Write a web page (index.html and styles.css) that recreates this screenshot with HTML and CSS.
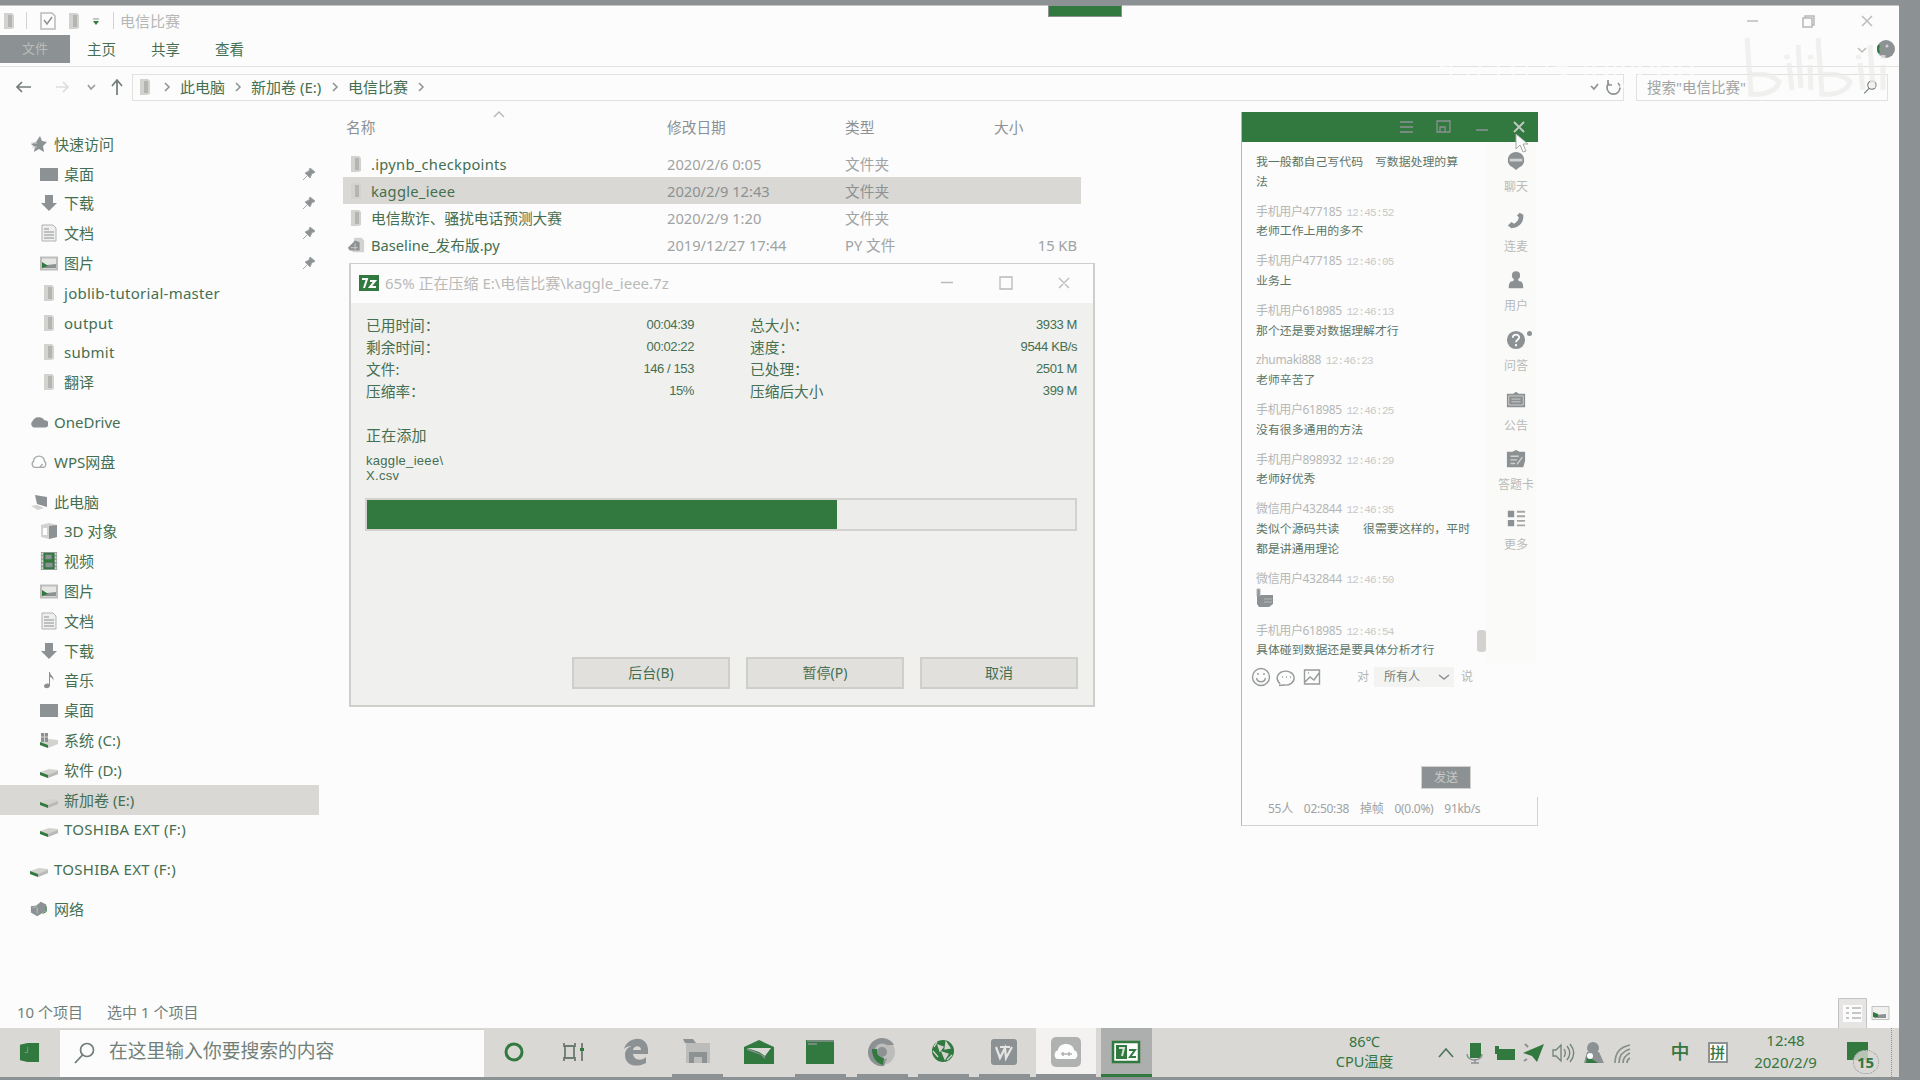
FILE: index.html
```html
<!DOCTYPE html>
<html lang="zh-CN">
<head>
<meta charset="utf-8">
<title>电信比赛</title>
<link rel="stylesheet" href="styles.css">
</head>
<body>
<svg class="defs" width="0" height="0">
  <symbol id="folder" viewBox="0 0 18 18"><path d="M4 1h8l2 2v13l-3 1H4z" fill="#d3d2ce"/><path d="M8 3h4v12H8z" fill="#b4b5b3"/></symbol>
  <symbol id="desk" viewBox="0 0 18 18"><path d="M0 3h18v13H0z" fill="#8c9193"/></symbol>
  <symbol id="down" viewBox="0 0 18 18"><path d="M5 1h8v8h4l-8 8-8-8h4z" fill="#8c9193"/></symbol>
  <symbol id="doc" viewBox="0 0 18 18"><path d="M2 1h11l3 3v13H2z" fill="#efefed" stroke="#b0b2b1"/><path d="M4 5h5M4 8h10M4 11h10M4 14h10" stroke="#8c9193"/></symbol>
  <symbol id="pic" viewBox="0 0 18 18"><path d="M1 3.500h16v12H1z" fill="#e6e6e4" stroke="#bdbebc" stroke-width="2"/><path d="M2 9l5 2 9-1v4H2z" fill="#8c9193"/><path d="M2 8l6 4-6 2z" fill="#31793f"/></symbol>
  <symbol id="cloud" viewBox="0 0 20 16"><path d="M4 14a4 4 0 0 1-1-7 7 6 0 0 1 13-1 4 4 0 0 1 1 8z" fill="#8c9193"/></symbol>
  <symbol id="cloudo" viewBox="0 0 20 18"><path d="M5 15a4 4 0 0 1-1-7 6 5.500 0 0 1 12 0 4 4 0 0 1-1 7zM11 15l3-4" fill="none" stroke="#a5a8a8" stroke-width="1.500"/></symbol>
  <symbol id="pc" viewBox="0 0 18 18"><path d="M5 2l12 2v10L7 11z" fill="#8c9193"/><path d="M1 13l6-1 7 3-6 2z" fill="#d3d2ce"/></symbol>
  <symbol id="cube" viewBox="0 0 18 18"><path d="M1 3l8-2 8 2v12l-8 2-8-2z" fill="#d3d2ce"/><path d="M9 4l8-1v12l-8 2z" fill="#8c9193"/><path d="M3 6h4v7H3z" fill="#fcfcfc"/></symbol>
  <symbol id="film" viewBox="0 0 18 20"><path d="M0 0h18v20H0z" fill="#9a9e9e"/><path d="M3 1h12v18H3z" fill="#31793f"/><path d="M5 3h7v5H5zM5 12h8v5H5z" fill="#8c9193"/><path d="M1.500 1v18M16.500 1v18" stroke="#fcfcfc" stroke-dasharray="2 2"/></symbol>
  <symbol id="note" viewBox="0 0 18 18"><path d="M9 1h1c0 4 5 4 3 9 0-3-2-4-3-4v9c-1 3-6 3-6 0 0-2 3-3 5-2z" fill="#8c9193"/></symbol>
  <symbol id="drive" viewBox="0 0 18 18"><path d="M0 11l9-3 9 1v4l-10 4-8-3z" fill="#d3d2ce"/><path d="M0 11l8 3v3l-8-3z" fill="#31793f"/><path d="M8 14l10-4v3L8 17z" fill="#b9bab8"/></symbol>
  <symbol id="cdrive" viewBox="0 0 18 18"><path d="M0 11l9-3 9 1v4l-10 4-8-3z" fill="#d3d2ce"/><path d="M1 2h7v9H1z" fill="#8c9193"/><path d="M4.500 2v9M1 6h7" stroke="#d3d2ce"/><path d="M0 11l8 3v3l-8-3z" fill="#31793f"/></symbol>
  <symbol id="net" viewBox="0 0 20 18"><path d="M1 6l6-1 5-4 6 3v7l-5 3-5 3-7-4z" fill="#8c9193"/><path d="M18 6v6l-4 2" stroke="#31793f" fill="none"/><path d="M3 8l4-2M8 7v7" stroke="#c4c5c3" fill="none"/></symbol>
  <symbol id="star" viewBox="0 0 18 18"><path d="M10 1l2 5 5 1-4 4 1 6-5-3-5 3 1-5-4-3 5-2z" fill="#8c9193"/><path d="M1 8h6M2 12h5" stroke="#d3d2ce"/></symbol>
  <symbol id="pin" viewBox="0 0 14 14"><path d="M8 1l5 4-1 1-2 .5L8 11 3 6l4-2 .5-2zM5 9l-4 4" fill="#8c9193" stroke="#a5a8a8"/></symbol>
  <symbol id="chev" viewBox="0 0 8 10"><path d="M2 1l4 4-4 4" fill="none" stroke="#8c9193" stroke-width="1.500"/></symbol>
  <symbol id="py" viewBox="0 0 20 18"><path d="M8 1h8l3 3v13H6z" fill="#d3d2ce"/><path d="M1 12l8-8 5 2v9H3z" fill="#8c9193"/><path d="M4 12h8M9 7v8" stroke="#d3d2ce"/></symbol>
  <symbol id="mag" viewBox="0 0 22 22"><circle cx="14" cy="8" r="6.500" fill="none" stroke="#717d77" stroke-width="1.700"/><path d="M9.500 13L2 21" stroke="#717d77" stroke-width="1.800"/></symbol>
</svg>
<div class="desktop">
  <main class="explorer">
    <div class="titlebar">
      <svg class="qi" viewBox="0 0 18 18"><use href="#folder"/></svg><i class="sep s1"></i>
      <svg class="qcheck" viewBox="0 0 16 18"><path d="M1 1h11l3 3v13H1z" fill="#fcfcfc" stroke="#b9bab8" stroke-width="1.500"/><path d="M4 8l3 4 5-7" fill="none" stroke="#8c9193" stroke-width="1.500"/></svg>
      <svg class="qi q2" viewBox="0 0 18 18"><use href="#folder"/></svg>
      <svg class="qcaret" viewBox="0 0 8 8"><path d="M1 1h6" stroke="#8c9193"/><path d="M1 3h6L4 7z" fill="#31793f"/></svg><i class="sep s2"></i>
      <span>电信比赛</span>
      <svg class="winctl" viewBox="0 0 140 20"><path d="M2 10h11M117 5l10 10M127 5l-10 10" stroke="#bbbcba" stroke-width="1.500" fill="none"/><path d="M58 7h9v9h-9zM60 7V5h9v9h-2" fill="none" stroke="#b5b7b5" stroke-width="1.500"/></svg>
    </div>
    <div class="tabs"><b>文件</b><span>主页</span><span>共享</span><span>查看</span>
      <svg class="help" viewBox="0 0 40 20"><path d="M2 9l4 4 4-4" fill="none" stroke="#bbbcba" stroke-width="1.500"/><circle cx="30" cy="10" r="9" fill="#8c9193"/><path d="M23 6a9 9 0 0 0 0 8" stroke="#31793f" fill="none" stroke-width="2"/><circle cx="31" cy="7" r="1.500" fill="#d3d2ce"/></svg>
    </div>
    <div class="address">
      <svg class="nav" viewBox="0 0 132 26"><g fill="none" stroke-width="1.700"><path d="M31 13H17M22 8l-5 5 5 5" stroke="#717d77"/><path d="M56 13h12M63 8l5 5-5 5" stroke="#dedddb"/><path d="M88 11l3 4 4-4" stroke="#999d9d"/><path d="M117 21V7M112 12l5-6 5 6" stroke="#717d77"/></g></svg>
      <div class="path">
        <svg class="pi"><use href="#folder"/></svg><svg class="ch c0"><use href="#chev"/></svg><span class="p1">此电脑</span><svg class="ch"><use href="#chev"/></svg><span class="p2">新加卷 (E:)</span><svg class="ch"><use href="#chev"/></svg><span class="p3">电信比赛</span><svg class="ch"><use href="#chev"/></svg>
        <svg class="refresh" viewBox="0 0 34 20"><path d="M1 9l3 3 4-5M19 6a6.500 6.500 0 1 0 9 0M18 3v5h4" fill="none" stroke="#8c9193" stroke-width="1.700"/></svg>
      </div>
      <div class="search"><span>搜索"电信比赛"</span><svg width="14" height="14"><use href="#mag"/></svg></div>
    </div>
    <div class="content">
      <nav class="side">
        <div class="n top"><svg><use href="#star"/></svg><span>快速访问</span></div>
        <div class="n"><svg><use href="#desk"/></svg><span>桌面</span><svg class="pin"><use href="#pin"/></svg></div>
        <div class="n"><svg><use href="#down"/></svg><span>下载</span><svg class="pin"><use href="#pin"/></svg></div>
        <div class="n"><svg><use href="#doc"/></svg><span>文档</span><svg class="pin"><use href="#pin"/></svg></div>
        <div class="n"><svg><use href="#pic"/></svg><span>图片</span><svg class="pin"><use href="#pin"/></svg></div>
        <div class="n"><svg><use href="#folder"/></svg><span class="lat">joblib-tutorial-master</span></div>
        <div class="n"><svg><use href="#folder"/></svg><span class="lat">output</span></div>
        <div class="n"><svg><use href="#folder"/></svg><span class="lat">submit</span></div>
        <div class="n"><svg><use href="#folder"/></svg><span>翻译</span></div>
        <div class="n top gap"><svg><use href="#cloud"/></svg><span>OneDrive</span></div>
        <div class="n top gap"><svg><use href="#cloudo"/></svg><span>WPS网盘</span></div>
        <div class="n top gap"><svg><use href="#pc"/></svg><span>此电脑</span></div>
        <div class="n"><svg><use href="#cube"/></svg><span>3D 对象</span></div>
        <div class="n"><svg><use href="#film"/></svg><span>视频</span></div>
        <div class="n"><svg><use href="#pic"/></svg><span>图片</span></div>
        <div class="n"><svg><use href="#doc"/></svg><span>文档</span></div>
        <div class="n"><svg><use href="#down"/></svg><span>下载</span></div>
        <div class="n"><svg><use href="#note"/></svg><span>音乐</span></div>
        <div class="n"><svg><use href="#desk"/></svg><span>桌面</span></div>
        <div class="n"><svg><use href="#cdrive"/></svg><span>系统 (C:)</span></div>
        <div class="n"><svg><use href="#drive"/></svg><span>软件 (D:)</span></div>
        <div class="n sel"><svg><use href="#drive"/></svg><span>新加卷 (E:)</span></div>
        <div class="n"><svg><use href="#drive"/></svg><span class="lat">TOSHIBA EXT (F:)</span></div>
        <div class="n top gap"><svg><use href="#drive"/></svg><span class="lat">TOSHIBA EXT (F:)</span></div>
        <div class="n top gap"><svg><use href="#net"/></svg><span>网络</span></div>
      </nav>
      <section class="files">
        <svg class="sort" viewBox="0 0 12 8"><path d="M1 6l5-5 5 5" fill="none" stroke="#b5b7b5" stroke-width="1.300"/></svg>
        <div class="f head"><span>名称</span><span>修改日期</span><span>类型</span><span>大小</span></div>
        <div class="f"><span class="lat"><svg><use href="#folder"/></svg>.ipynb_checkpoints</span><span>2020/2/6 0:05</span><span>文件夹</span><span></span></div>
        <div class="f sel"><span class="lat"><svg><use href="#folder"/></svg>kaggle_ieee</span><span>2020/2/9 12:43</span><span>文件夹</span><span></span></div>
        <div class="f"><span><svg><use href="#folder"/></svg>电信欺诈、骚扰电话预测大赛</span><span>2020/2/9 1:20</span><span>文件夹</span><span></span></div>
        <div class="f"><span><svg><use href="#py"/></svg>Baseline_发布版.py</span><span>2019/12/27 17:44</span><span>PY 文件</span><span>15 KB</span></div>
      </section>
    </div>
    <footer class="status"><span>10 个项目</span><span>选中 1 个项目</span>
      <svg class="views" viewBox="0 0 54 30"><path d="M.5.500h28v30H.5z" fill="#e6e5e3" stroke="#c2c3c1"/><path d="M5 7h19v17H5z" fill="#fcfcfc"/><path d="M8 10h3M14 10h9M8 15h3M14 15h9M8 20h3M14 20h9" stroke="#8c9193"/><path d="M34 8.500h17v13H34z" fill="#f0f0ee" stroke="#c2c3c1"/><path d="M36 17l12-1v4H36z" fill="#8c9193"/><path d="M35 14l5 2v3h-5z" fill="#31793f"/></svg>
    </footer>
  </main>

  <i class="toptab"></i>

  <section class="zip">
    <header><svg class="zlogo" viewBox="0 0 20 16"><path d="M0 0h20v16H0z" fill="#31793f"/><path d="M3 4h5L5 13M11 6h5l-5 6h6" fill="none" stroke="#fcfcfc" stroke-width="2"/></svg><span>65% 正在压缩 E:\电信比赛\kaggle_ieee.7z</span>
      <svg class="zctl" viewBox="0 0 132 20"><path d="M3 9.500h12M62 4h12v12H62zM121 5l10 10M131 5l-10 10" fill="none" stroke="#b9bab8" stroke-width="1.300"/></svg></header>
    <div class="zbody">
      <div class="stats">
        <span>已用时间：</span><em>00:04:39</em><span>总大小：</span><em>3933 M</em>
        <span>剩余时间：</span><em>00:02:22</em><span>速度：</span><em>9544 KB/s</em>
        <span>文件:</span><em>146 / 153</em><span>已处理：</span><em>2501 M</em>
        <span>压缩率：</span><em>15%</em><span>压缩后大小</span><em>399 M</em>
      </div>
      <p class="adding">正在添加</p>
      <p class="cur">kaggle_ieee\<br>X.csv</p>
      <div class="bar"><i></i></div>
      <div class="btns"><button>后台(B)</button><button>暂停(P)</button><button>取消</button></div>
    </div>
  </section>

  <section class="chat">
    <header><svg viewBox="0 0 140 30"><g fill="none" stroke="#8c9193" stroke-width="1.300"><path d="M10 10h13M10 15h13M10 20h13M47 9h13v11H47zM50 20v-5h5v5M86 18h12"/><path d="M124 10l10 10M134 10l-10 10" stroke="#c4c8c5" stroke-width="1.800"/></g></svg></header>
    <div class="cmain">
      <div class="msgs">
        <div class="m"><p>我一般都自己写代码　写数据处理的算<br>法</p></div>
        <div class="m"><h4>手机用户477185 <i>12:45:52</i></h4><p>老师工作上用的多不</p></div>
        <div class="m"><h4>手机用户477185 <i>12:46:05</i></h4><p>业务上</p></div>
        <div class="m"><h4>手机用户618985 <i>12:46:13</i></h4><p>那个还是要对数据理解才行</p></div>
        <div class="m"><h4>zhumaki888 <i>12:46:23</i></h4><p>老师辛苦了</p></div>
        <div class="m"><h4>手机用户618985 <i>12:46:25</i></h4><p>没有很多通用的方法</p></div>
        <div class="m"><h4>手机用户898932 <i>12:46:29</i></h4><p>老师好优秀</p></div>
        <div class="m"><h4>微信用户432844 <i>12:46:35</i></h4><p>类似个源码共读　　很需要这样的，平时<br>都是讲通用理论</p></div>
        <div class="m thumbm"><h4>微信用户432844 <i>12:46:50</i></h4><svg viewBox="0 0 18 20"><path d="M1 7V1h3v6h13v9l-4 3H3l-2-3z" fill="#8c9193"/><path d="M1 8V1h3v7M8 11h8M8 14h8" fill="none" stroke="#b5b7b5"/></svg></div>
        <div class="m"><h4>手机用户618985 <i>12:46:54</i></h4><p>具体碰到数据还是要具体分析才行</p></div>
      </div>
      <i class="thumb"></i>
      <aside>
        <div><svg viewBox="0 0 22 22"><path d="M11 1a9 9 0 0 1 3 17.500L11 21l-3-2.500A9 9 0 0 1 11 1z" fill="#8c9193"/><path d="M4 8.500h14v3H4z" fill="#d3d2ce"/></svg>聊天</div>
        <div><svg viewBox="0 0 22 22"><path d="M15 2l4 2c1 8-4 14-13 15l-4-3 4-4 3 2c3-2 5-4 5-7l-2-2z" fill="#8c9193"/></svg>连麦</div>
        <div><svg viewBox="0 0 22 22"><circle cx="11" cy="6" r="4.500" fill="#8c9193"/><path d="M9 9h4l1 3c4 0 5 3 5 8H3c0-5 1-8 5-8z" fill="#8c9193"/></svg>用户</div>
        <div><svg viewBox="0 0 22 22"><circle cx="11" cy="11" r="10" fill="#8c9193"/><path d="M7.500 8.500c0-5 7.500-4 7 0-.3 2-3.500 2-3.500 5M11 15.500v2.500" fill="none" stroke="#fcfcfc" stroke-width="2"/></svg><u></u>问答</div>
        <div><svg viewBox="0 0 22 22"><path d="M1 4h7l3-2 3 2h7v15H1z" fill="#8c9193"/><path d="M3 6.500h16v10H3zM6 10h10M6 13h10" fill="none" stroke="#d3d2ce"/></svg>公告</div>
        <div><svg viewBox="0 0 22 22"><path d="M1 3h6l4-2 4 2h6v10l-2 7H1z" fill="#8c9193"/><path d="M5 8h9M5 12h7M5 16h5M18 9l-6 8" stroke="#d3d2ce" stroke-width="1.500"/></svg>答题卡</div>
        <div><svg viewBox="0 0 22 22"><path d="M2 2h7v7H2zM2 12h7v7H2z" fill="#8c9193"/><path d="M12 3h9M12 8h9M12 13h9M12 18h9" stroke="#a5a8a8" stroke-width="2"/></svg>更多</div>
      </aside>
    </div>
    <div class="tools">
      <svg viewBox="0 0 72 20"><g fill="none" stroke="#979b9c" stroke-width="1.400"><circle cx="10" cy="10" r="8.500"/><path d="M5.500 11c1 5 8 5 9 0M7 6v2M13 6v2"/><path d="M29 17l-1-1.500a8.500 7 0 1 1 5 2.500l-5 .5M31 10h1M35 10h1M39 10h1"/><path d="M53.500 3h15v14h-15zM54 15l5-5 4 3 5-7M57 6h1"/></g></svg>
      <span class="to">对</span><span class="who">所有人<svg viewBox="0 0 12 8"><path d="M1 2l5 4 5-4" fill="none" stroke="#8c9193" stroke-width="1.500"/></svg></span><span>说</span>
    </div>
    <div class="send"><button>发送</button></div>
    <footer><span>55人</span><span>02:50:38</span><span>掉帧</span><span>0(0.0%)</span><span>91kb/s</span></footer>
  </section>
  <svg class="cursor" viewBox="0 0 16 20"><path d="M1 1l12 10H8l3 7-3 1-3-7-4 4z" fill="#fcfcfc" stroke="#a5a8a8"/></svg>

  <div class="mark"><span>七月在线 julyedu</span>
    <svg viewBox="0 0 150 62"><g fill="none" stroke="#ebebe9" stroke-width="5"><path d="M7 1l4 56c14 2 26-4 28-12-6-7-16-9-28-7M78 1l4 56c14 2 26-4 28-12-6-7-16-9-28-7M49 26l3 27M58 8l3 43M46 18l2 4M70 18l1 4M70 28l1 25M120 26l3 27M130 8l3 43M118 18l1 4M143 18v4M143 28v25"/></g></svg></div>

  <div class="taskbar">
    <div class="start"><svg viewBox="0 0 22 22"><path d="M1 3l8-2v20l-8-2zM9 1h12v20H9z" fill="#31793f"/><path d="M9 5v6H6" stroke="#8c9193" fill="none"/></svg></div>
    <div class="tsearch"><svg><use href="#mag"/></svg><span>在这里输入你要搜索的内容</span></div>
    <div class="apps">
      <div class="small"><svg viewBox="0 0 30 30"><circle cx="15" cy="15" r="8" fill="none" stroke="#31793f" stroke-width="3"/></svg></div>
      <div class="small"><svg viewBox="0 0 30 30"><path d="M6 6v3h11V6M6 24v-3h11v3M7 9v12M16 9v12M24 6v18" fill="none" stroke="#6d7b74" stroke-width="1.800"/><path d="M22 11h4v3h-4z" fill="#31793f"/></svg></div>
      <div><svg viewBox="0 0 30 30"><path d="M3 12C7-1 26-2 27 12v5H12c1 7 9 7 13 3v6c-9 5-21 3-21-8 0-5 3-8 7-9-4 0-6 1-8 3zM12 13h8c0-5-7-5-8 0z" fill="#8c9193" fill-rule="evenodd"/></svg></div>
      <div class="on"><svg viewBox="0 0 30 30"><path d="M1 2h10l3 4H3z" fill="#8c9193"/><path d="M4 6h24v20H4z" fill="#bcbdbb"/><path d="M7 15h18v11h-5v-6h-8v6H7z" fill="#8c9193"/></svg></div>
      <div><svg viewBox="0 0 30 30"><path d="M0 10L15 3l15 7v17H0z" fill="#31793f"/><path d="M3 11h24l-6 8-6-4z" fill="#d9d8d4"/><path d="M3 11l18 8v3l-4-4-14-5z" fill="#8c9193"/></svg></div>
      <div class="on"><svg viewBox="0 0 30 30"><path d="M1 3h28v24H1z" fill="#31793f"/><path d="M2 4h27M3 7h9" stroke="#8c9193" stroke-width="1.500"/></svg></div>
      <div class="on"><svg viewBox="0 0 30 30"><circle cx="15" cy="15" r="13" fill="#bcbdbb"/><path d="M27 8A14 14 0 1 0 17 29l3-8A8 8 0 1 1 20 8z" fill="#8c9193"/><path d="M5 12c0 8 4 14 11 16l1-7c-5-1-7-5-7-9z" fill="#31793f"/><circle cx="15" cy="15" r="5" fill="#8c9193"/></svg></div>
      <div class="on"><svg viewBox="0 0 30 30"><circle cx="15" cy="14" r="11" fill="#31793f"/><path d="M10 8l5 2-3 4zM18 5l4 6-5 1zM14 15l6 2-3 5zM5 14l5 6M24 18l-5 5M9 5l-3 5" fill="#d3d2ce" stroke="#d3d2ce" stroke-width="1.300"/></svg></div>
      <div class="on"><svg viewBox="0 0 30 30"><rect x="2" y="2" width="26" height="26" rx="3" fill="#8c9193"/><path d="M7 10l4 11 5-10 1 10 6-11M11 10h10" fill="none" stroke="#e5e4e2" stroke-width="2.200"/></svg></div>
      <div class="on lit"><svg viewBox="0 0 30 30"><rect x="0" y="0" width="30" height="30" rx="5" fill="#b0b2b1"/><path d="M6 22a5 5 0 0 1 1-9c1-8 15-8 16 0a5 5 0 0 1 1 9z" fill="#fcfcfc"/><path d="M10 17h11M12 15v4M18 15v4" stroke="#b0b2b1" stroke-width="1.500"/></svg></div>
      <div class="on act"><svg viewBox="0 0 30 30"><path d="M2 5h26v20H2z" fill="#fcfcfc" stroke="#31793f" stroke-width="2.500"/><path d="M5 8h11v14H5z" fill="#31793f"/><path d="M8 11h5l-2 8" fill="none" stroke="#d9e3da" stroke-width="2"/><path d="M18 13h6l-5 7h6" fill="none" stroke="#31793f" stroke-width="2"/></svg></div>
    </div>
    <div class="temp">86℃<br>CPU温度</div>
    <svg class="tray" viewBox="0 0 200 24"><g fill="#31793f"><path d="M2 16l7-8 7 8" fill="none" stroke="#4c7659" stroke-width="1.600"/><path d="M33 2h11v15H33z"/><path d="M30 13c0 8 15 8 15 0M38 18v4M34 22h8" fill="none" stroke="#8c9193" stroke-width="1.500"/><path d="M58 5h4v3h16v11H60v-6h-2z"/><path d="M86 12L107 3l-7 18-5-6z"/><path d="M88 3l3 3M87 20l3-2" stroke="#8c9193" stroke-width="2"/><path d="M116 9h3l5-5v16l-5-5h-3zM127 8c2 3 2 5 0 8M130 5c4 5 4 9 0 14M133 3c5 6 5 12 0 18" fill="none" stroke="#718278" stroke-width="1.300"/><circle cx="156" cy="7" r="6" fill="#8c9193"/><path d="M150 11h12l5 11h-20z" fill="#8c9193"/><path d="M150 15l11 7h-12z"/><circle cx="153" cy="15" r="3" fill="#fcfcfc"/><path d="M178 22c0-10 5-16 15-18M182 22c0-7 4-12 11-14M186 22c0-5 3-8 7-10M190 22c0-3 1-4 3-5" fill="none" stroke="#859089" stroke-width="1.700"/></g></svg>
    <b class="zhong">中</b><b class="pin-ime">拼</b>
    <div class="clock">12:48<br>2020/2/9</div>
    <div class="notif"><i></i><b>15</b></div>
  </div>
</div>
</body>
</html>
```
FILE: styles.css
```css
* { box-sizing: border-box; }
body { margin: 0; width: 1920px; height: 1080px; overflow: hidden; font: 15px/20px "Noto Sans", "Noto Sans CJK SC", sans-serif; color: #446f51; }
.defs { display: none; }
svg { display: block; flex: none; }
p, h4 { margin: 0; font-weight: 400; }
i, em { font-style: normal; }
span { white-space: nowrap; }
button { padding: 0; font: inherit; color: inherit; }
.desktop { position: relative; height: 1080px; background: #8c9193; padding-top: 5px; display: flex; flex-direction: column; }
.explorer { width: 1899px; height: 1023px; background: #fcfcfc; border-top: 1px solid #c4c5c3; display: flex; flex-direction: column; }

.titlebar { height: 28px; display: flex; align-items: center; color: #b5b7b5; padding-top: 1px; }
.qi { width: 18px; height: 18px; }
.sep { width: 1px; height: 17px; background: #d3d2ce; }
.s1 { margin-left: 8px; }
.qcheck { width: 16px; height: 18px; margin-left: 13px; }
.q2 { margin-left: 9px; }
.qcaret { width: 8px; height: 8px; margin: 3px 0 0 9px; }
.s2 { margin: 0 6px 0 13px; }
.winctl { width: 140px; height: 20px; margin-left: auto; margin-right: 14px; }

.tabs { height: 33px; display: flex; align-items: center; border-bottom: 1px solid #e2e1df; padding-bottom: 3px; font-size: 14.500px; }
.tabs b { width: 70px; height: 28px; background: #8c9193; color: #b9bdb9; font-weight: 400; text-align: center; font-size: 13px; line-height: 27px; }
.tabs span { margin-left: 17px; width: 47px; }
.help { width: 40px; height: 20px; margin-left: auto; margin-right: 3px; }

.address { height: 41px; display: flex; align-items: center; padding-bottom: 1px; }
.nav { width: 132px; height: 26px; }
.path { width: 1492px; height: 27px; border: 1px solid #e2e1df; display: flex; align-items: center; padding-left: 3px; }
.pi { width: 18px; height: 18px; }
.ch { width: 8px; height: 10px; margin: 0 9px 0 10px; }
.ch.c0 { margin-left: 9px; }
.p1 { width: 44px; } .p2 { width: 70px; } .p3 { width: 59px; }
.refresh { width: 34px; height: 20px; margin-left: auto; margin-right: -1px; }
.search { width: 252px; height: 27px; margin-left: 12px; border: 1px solid #e2e1df; display: flex; align-items: center; justify-content: space-between; padding: 0 10px; color: #a0a3a3; font-size: 14.500px; }

.content { flex: 1; display: flex; min-height: 0; }
.side { width: 320px; padding-top: 21px; }
.n { height: 29.800px; width: 319px; display: flex; align-items: center; padding-left: 40px; }
.n svg { width: 18px; height: 18px; margin-right: 6px; }
.n.top { padding-left: 30px; }
.n.gap { margin-top: 10px; }
.n .pin { width: 14px; height: 14px; margin: 0 3px 0 auto; }
.n.sel, .f.sel { background: #d9d8d4; }
.lat { letter-spacing: .27px; }
.files { position: relative; width: 800px; padding-left: 23px; }
.sort { position: absolute; left: 173px; top: 3px; width: 12px; height: 8px; }
.f { width: 738px; height: 27px; display: grid; grid-template-columns: 324px 178px 149px 1fr; align-items: center; color: #a0a3a3; font-size: 14.700px; }
.f.head { height: 36px; margin: 1px 0 5px; color: #8c9193; }
.f span:first-child { display: flex; align-items: center; color: #446f51; }
.f.head span:first-child { color: #8c9193; padding-left: 3px; }
.f svg { width: 18px; height: 18px; margin: 0 6px 0 4px; }
.f:not(.head) span:last-child { text-align: right; padding-right: 4px; }
.f.sel span + span { color: #8c9193; }
.status { height: 30px; display: flex; align-items: center; padding: 0 0 0 17px; gap: 24px; color: #72807a; line-height: 18px; }
.status span { margin-top: -2px; }
.views { width: 54px; height: 30px; margin-left: auto; margin-right: 7px; }

.toptab { position: absolute; left: 1048px; top: 5px; width: 74px; height: 12px; background: #31793f; border: 1px solid #8c9193; }

.zip { position: absolute; left: 349px; top: 263px; width: 746px; height: 444px; background: #f0f0ee; border: 2px solid #cececb; border-top-width: 1px; }
.zip header { height: 39px; background: #fcfcfc; display: flex; align-items: center; padding: 0 23px 2px 8px; color: #b9bab8; }
.zlogo { width: 20px; height: 16px; margin-right: 6px; }
.zctl { width: 132px; height: 20px; margin-left: auto; }
.zbody { padding: 11px 16px 0 15px; }
.stats { display: grid; grid-template-columns: 150px 178px 58px 1fr; grid-auto-rows: 22px; align-items: center; font-size: 14.700px; }
.stats span:nth-child(4n+3) { margin-left: 56px; }
.stats em { font: 13px/20px "Liberation Sans", sans-serif; letter-spacing: -.4px; text-align: right; white-space: nowrap; }
.adding { margin-top: 23px; letter-spacing: .2px; }
.cur { margin-top: 8px; font: 13px/15px "Liberation Sans", sans-serif; letter-spacing: .3px; }
.bar { margin: 15px 0 0 -1px; height: 33px; border: 2px solid #d3d2ce; background: #ececea; }
.bar i { display: block; width: 66.400%; height: 29px; background: #31793f; }
.btns { display: flex; justify-content: flex-end; gap: 16px; margin: 126px -1px 0 0; }
.btns button { width: 158px; height: 32px; border: 2px solid #cfcecb; background: #e1e0dd; font-size: 14px; }

.chat { position: absolute; left: 1241px; top: 112px; width: 297px; height: 714px; background: #fcfcfc; border-left: 1px solid #b5b7b5; border-bottom: 1px solid #d3d2ce; font-size: 12px; color: #768079; display: flex; flex-direction: column; }
.chat header { height: 30px; background: #31793f; display: flex; justify-content: flex-end; }
.chat header svg { width: 140px; height: 30px; margin-right: 8px; }
.cmain { height: 521px; display: flex; }
.msgs { width: 235px; padding: 10px 0 0 14px; line-height: 19.800px; }
.m { margin-bottom: 10px; }
.m p { color: #5d7566; white-space: nowrap; font-size: 11.900px; }
.m h4 { font-size: 12px; color: #b5b7b5; white-space: nowrap; line-height: 19.800px; letter-spacing: -.35px; }
.m h4 i { font: 11px "Liberation Mono", monospace; color: #c9c9c6; margin-left: 2px; letter-spacing: -.7px; }
.thumbm { height: 42px; }
.thumbm svg { width: 18px; height: 20px; margin-top: 0; }
.thumb { width: 9px; height: 22px; border-radius: 3px; background: #d3d2ce; margin-top: 488px; }
aside { width: 50px; padding-top: 8px; background: #fafaf9; color: #b9bab8; text-align: center; }
aside div { position: relative; height: 59.700px; width: 60px; line-height: 26px; }
aside svg { width: 20px; height: 22px; margin: 0 auto 2px; }
aside u { position: absolute; left: 41px; top: 2px; width: 5px; height: 5px; border-radius: 3px; background: #8c9193; }
.tools { height: 70px; display: flex; align-items: flex-start; padding: 4px 0 0 9px; color: #b5b7b5; }
.tools > svg { width: 72px; height: 20px; }
.to { margin-left: 34px; }
.who { width: 80px; margin: 0 7px 0 5px; padding: 0 4px 0 10px; background: #f3f3f1; color: #768079; display: flex; align-items: center; justify-content: space-between; }
.who svg { width: 12px; height: 8px; }
.send { padding-left: 179px; height: 64px; padding-top: 33px; }
.send button { display: block; width: 50px; height: 23px; border: 1px solid #d3d2ce; background: #8c9193; color: #c8cac8; }
.chat footer { flex: 1; display: flex; gap: 11px; padding: 0 0 4px 26px; align-items: center; border-right: 1px solid #d3d2ce; color: #9fa2a2; letter-spacing: -.3px; }
.cursor { position: absolute; left: 1515px; top: 133px; width: 16px; height: 20px; }

.mark { position: absolute; left: 1438px; top: 37px; display: flex; font-size: 34px; line-height: 60px; color: #fcfcfc; }
.mark span { width: 302px; letter-spacing: -.3px; opacity: .7; }
.mark svg { width: 150px; height: 62px; opacity: .7; }

.taskbar { width: 1899px; height: 49px; background: #d9d8d4; display: flex; align-items: center; color: #35753f; line-height: 21px; }
.start { width: 60px; padding-left: 19px; }
.start svg { width: 21px; height: 21px; }
.tsearch { width: 424px; height: 48px; background: #fcfcfc; display: flex; align-items: center; font-size: 18.800px; color: #72807a; border-top: 1px solid #d3d2ce; }
.tsearch span { margin-top: -3px; }
.tsearch svg { width: 22px; height: 22px; margin: 0 14px 0 13px; }
.apps { display: flex; height: 49px; }
.apps div { width: 61.400px; height: 49px; padding: 9px 15px 0; }
.apps svg { width: 30px; height: 30px; }
.apps .small { width: 59px; padding-left: 15px; }
.apps .small + .small { width: 63px; }
.apps .on { background: linear-gradient(#8c9193, #8c9193) 5px 46px / 51px 3px no-repeat; }
.apps .on.lit { background: linear-gradient(#8c9193, #8c9193) 0 46px / 60px 3px no-repeat, linear-gradient(#f3f2f0, #f3f2f0) 0 0 / 60px 49px no-repeat; }
.apps .on.act { background: linear-gradient(#31793f, #31793f) 4px 46px / 51px 3px no-repeat, linear-gradient(#adafae, #adafae) 4px 0 / 51px 49px no-repeat; padding-left: 14px; }
.temp { width: 90px; margin: -3px 0 0 161px; text-align: center; font-size: 14.500px; line-height: 20px; }
.tray { width: 200px; height: 24px; margin-left: 27px; }
.zhong { width: 20px; margin-left: 34px; font-size: 19px; font-weight: 500; }
.pin-ime { width: 20px; height: 21px; margin-left: 17px; border: 2px solid #8c9193; background: #fcfcfc; font-size: 15px; line-height: 16px; text-align: center; font-weight: 500; }
.clock { width: 90px; margin: -3px 0 0 13px; text-align: center; line-height: 22px; }
.notif { position: relative; width: 44px; height: 49px; margin-left: 17px; border-right: 1px dotted #8c9193; }
.notif i { position: absolute; left: -1px; top: 14px; width: 21px; height: 18px; background: #31793f; }
.notif b { position: absolute; left: 5px; top: 22px; width: 26px; height: 24px; border-radius: 12px; border: 1px dotted #8c9193; background: #d9d8d4cc; text-align: center; line-height: 22px; }
```
